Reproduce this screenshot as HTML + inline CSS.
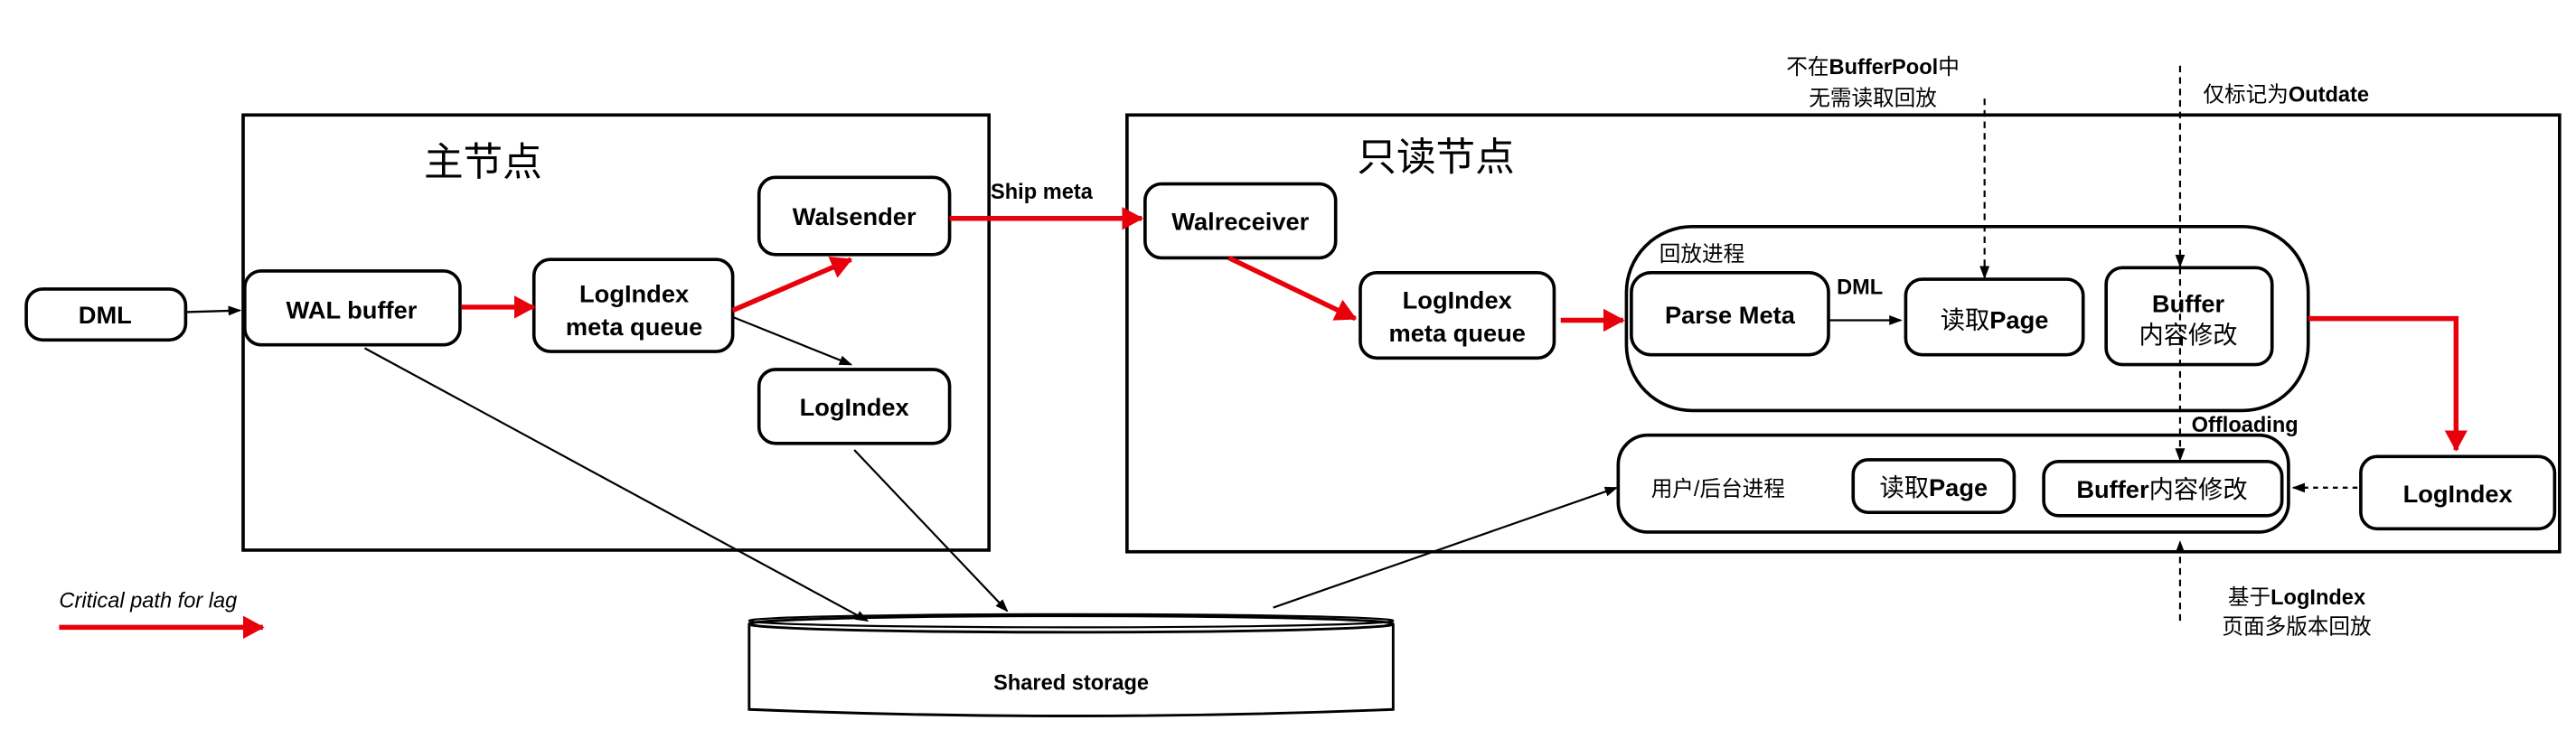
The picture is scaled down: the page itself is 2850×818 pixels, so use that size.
<!DOCTYPE html>
<html><head><meta charset="utf-8"><style>
html,body{margin:0;padding:0;background:#fff;width:2850px;height:818px;overflow:hidden}
svg{display:block}
text{font-family:"Liberation Sans","Noto Sans CJK SC",sans-serif;fill:#000}
.b{font-weight:bold;font-size:15px}
</style></head><body>
<svg width="2850" height="818" viewBox="0 0 1568 450" xmlns="http://www.w3.org/2000/svg">
<defs>
<marker id="ab" markerWidth="8" markerHeight="8" refX="7" refY="4" orient="auto" markerUnits="userSpaceOnUse"><path d="M0,1 L8,4 L0,7 Z" fill="#000"/></marker>
<marker id="ar" markerWidth="14" markerHeight="14" refX="12" refY="7" orient="auto" markerUnits="userSpaceOnUse"><path d="M0,0 L13,7 L0,14 Z" fill="#e8000b"/></marker>
</defs>
<g fill="none" stroke="#000">
<rect x="148" y="70" width="454" height="265" stroke-width="2"/>
<rect x="686" y="70" width="872" height="266" stroke-width="2"/>
<rect x="16" y="176" width="97" height="31" rx="10" stroke-width="2"/>
<rect x="149" y="165" width="131" height="45" rx="10" stroke-width="2"/>
<rect x="325" y="158" width="121" height="56" rx="10" stroke-width="2"/>
<rect x="462" y="108" width="116" height="47" rx="10" stroke-width="2"/>
<rect x="462" y="225" width="116" height="45" rx="10" stroke-width="2"/>
<rect x="697" y="112" width="116" height="45" rx="10" stroke-width="2"/>
<rect x="828" y="166" width="118" height="52" rx="10" stroke-width="2"/>
<rect x="990" y="138" width="415" height="112" rx="40" stroke-width="2"/>
<rect x="993" y="166" width="120" height="50" rx="12" stroke-width="2"/>
<rect x="1160" y="170" width="108" height="46" rx="10" stroke-width="2"/>
<rect x="1282" y="163" width="101" height="59" rx="10" stroke-width="2"/>
<rect x="985" y="265" width="408" height="59" rx="18" stroke-width="2"/>
<rect x="1128" y="280" width="98" height="32" rx="9" stroke-width="2"/>
<rect x="1244" y="281" width="145" height="33" rx="9" stroke-width="2"/>
<rect x="1437" y="278" width="118" height="44" rx="10" stroke-width="2"/>
<!-- storage -->
<path d="M456,380 L456,432 Q652,440 848,432 L848,380" stroke-width="1.6" fill="#fff"/>
<ellipse cx="652" cy="380" rx="196" ry="5" stroke-width="1.6" fill="#fff"/>
<ellipse cx="652" cy="378" rx="196" ry="4" stroke-width="1.2"/>
<!-- black lines -->
<line x1="113" y1="190" x2="146" y2="189" stroke-width="1.3" marker-end="url(#ab)"/>
<line x1="446" y1="193" x2="518" y2="222" stroke-width="1.2" marker-end="url(#ab)"/>
<line x1="1113" y1="195" x2="1157" y2="195" stroke-width="1.2" marker-end="url(#ab)"/>
<line x1="222" y1="212" x2="528" y2="378" stroke-width="1.2" marker-end="url(#ab)"/>
<line x1="520" y1="274" x2="613" y2="372" stroke-width="1.2" marker-end="url(#ab)"/>
<line x1="775" y1="370" x2="984" y2="297" stroke-width="1.2" marker-end="url(#ab)"/>
<!-- dashed -->
<line x1="1208" y1="60" x2="1208" y2="169" stroke-width="1.2" stroke-dasharray="4,3" marker-end="url(#ab)"/>
<line x1="1327" y1="40" x2="1327" y2="162" stroke-width="1.2" stroke-dasharray="4,3" marker-end="url(#ab)"/>
<line x1="1327" y1="163" x2="1327" y2="280" stroke-width="1.2" stroke-dasharray="4,3" marker-end="url(#ab)"/>
<line x1="1327" y1="378" x2="1327" y2="330" stroke-width="1.2" stroke-dasharray="4,3" marker-end="url(#ab)"/>
<line x1="1435" y1="297" x2="1396" y2="297" stroke-width="1.3" stroke-dasharray="3,3" marker-end="url(#ab)"/>
</g>
<g stroke="#e8000b" stroke-width="3" fill="none">
<line x1="281" y1="187" x2="325" y2="187" marker-end="url(#ar)"/>
<line x1="446" y1="189" x2="518" y2="158" marker-end="url(#ar)"/>
<line x1="578" y1="133" x2="695" y2="133" marker-end="url(#ar)"/>
<line x1="748" y1="157" x2="825" y2="194" marker-end="url(#ar)"/>
<line x1="950" y1="195" x2="988" y2="195" marker-end="url(#ar)"/>
<polyline points="1405,194 1495,194 1495,274" marker-end="url(#ar)"/>
<line x1="36" y1="382" x2="160" y2="382" marker-end="url(#ar)"/>
</g>
<text x="258" y="107" font-size="24">主节点</text>
<text x="826" y="104" font-size="24">只读节点</text>
<text class="b" x="64" y="197" text-anchor="middle">DML</text>
<text class="b" x="214" y="194" text-anchor="middle">WAL buffer</text>
<text class="b" x="386" y="184" text-anchor="middle">LogIndex</text>
<text class="b" x="386" y="204" text-anchor="middle">meta queue</text>
<text class="b" x="520" y="137" text-anchor="middle">Walsender</text>
<text class="b" x="520" y="253" text-anchor="middle">LogIndex</text>
<text x="603" y="121" font-size="13" font-weight="bold">Ship meta</text>
<text class="b" x="755" y="140" text-anchor="middle">Walreceiver</text>
<text class="b" x="887" y="188" text-anchor="middle">LogIndex</text>
<text class="b" x="887" y="208" text-anchor="middle">meta queue</text>
<text x="1010" y="159" font-size="13">回放进程</text>
<text class="b" x="1053" y="197" text-anchor="middle">Parse Meta</text>
<text x="1118" y="179" font-size="13" font-weight="bold">DML</text>
<text class="b" x="1214" y="200" text-anchor="middle" font-weight="normal"><tspan font-weight="normal">读取</tspan>Page</text>
<text class="b" x="1332" y="190" text-anchor="middle">Buffer</text>
<text x="1332" y="209" text-anchor="middle" font-size="15">内容修改</text>
<text x="1005" y="302" font-size="13">用户/后台进程</text>
<text class="b" x="1177" y="302" text-anchor="middle"><tspan font-weight="normal">读取</tspan>Page</text>
<text class="b" x="1316" y="303" text-anchor="middle">Buffer<tspan font-weight="normal">内容修改</tspan></text>
<text class="b" x="1496" y="306" text-anchor="middle">LogIndex</text>
<text x="1334" y="263" font-size="13" font-weight="bold">Offloading</text>
<text x="1140" y="45" font-size="13" text-anchor="middle">不在<tspan font-weight="bold">BufferPool</tspan>中</text>
<text x="1140" y="64" font-size="13" text-anchor="middle">无需读取回放</text>
<text x="1341" y="62" font-size="13">仅标记为<tspan font-weight="bold">Outdate</tspan></text>
<text x="1398" y="368" font-size="13" text-anchor="middle">基于<tspan font-weight="bold">LogIndex</tspan></text>
<text x="1398" y="386" font-size="13" text-anchor="middle">页面多版本回放</text>
<text x="652" y="420" font-size="13" font-weight="bold" text-anchor="middle">Shared storage</text>
<text x="36" y="370" font-size="13" font-style="italic">Critical path for lag</text>
</svg>
</body></html>
